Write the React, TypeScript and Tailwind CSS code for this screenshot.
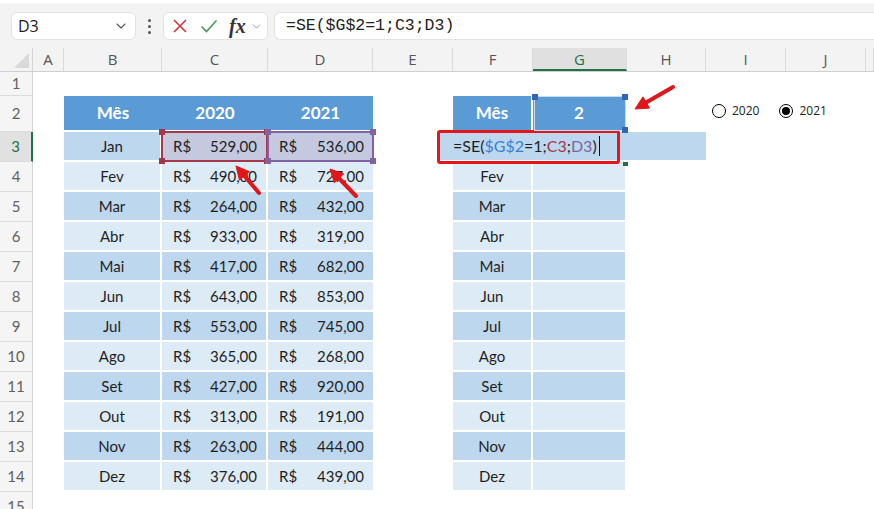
import { ChevronDown } from "lucide-react";

const colHeads = [
  { k: "A", w: "w-[31px]" },
  { k: "B", w: "w-[98px]" },
  { k: "C", w: "w-[106px]" },
  { k: "D", w: "w-[105px]" },
  { k: "E", w: "w-[80px]" },
  { k: "F", w: "w-[80px]" },
  { k: "G", w: "w-[94px]" },
  { k: "H", w: "w-[79px]" },
  { k: "I", w: "w-[80px]" },
  { k: "J", w: "w-[80px]" },
  { k: "", w: "w-[8px]" },
];

const data: [string, string, string][] = [
  ["Jan", "529,00", "536,00"],
  ["Fev", "490,00", "727,00"],
  ["Mar", "264,00", "432,00"],
  ["Abr", "933,00", "319,00"],
  ["Mai", "417,00", "682,00"],
  ["Jun", "643,00", "853,00"],
  ["Jul", "553,00", "745,00"],
  ["Ago", "365,00", "268,00"],
  ["Set", "427,00", "920,00"],
  ["Out", "313,00", "191,00"],
  ["Nov", "263,00", "444,00"],
  ["Dez", "376,00", "439,00"],
];

function RowHead({ n, active }: { n: number; active?: boolean }) {
  return (
    <div
      className={
        "flex w-[33px] shrink-0 items-center justify-center border-b border-[#dcdcdc] text-[15px] " +
        (active
          ? "border-r-2 border-r-[#217346] bg-[#e1e1e1] text-[#217346]"
          : "border-r border-r-[#d4d4d4] bg-[#f5f5f5] text-[#616161]")
      }
    >
      {n}
    </div>
  );
}

function Money({ v, bg, w, sep }: { v: string; bg: string; w: string; sep?: boolean }) {
  return (
    <div
      className={`${w} ${bg} flex shrink-0 items-center justify-between border-b-2 border-white pl-[11px] pr-[9px] ${
        sep ? "border-r-2" : ""
      }`}
    >
      <span>R$</span>
      <span>{v}</span>
    </div>
  );
}

function Handle({ className }: { className: string }) {
  return <div className={"absolute h-[6px] w-[6px] " + className} />;
}

function arrowHead(tx: number, ty: number, sx: number, sy: number) {
  const dx = tx - sx;
  const dy = ty - sy;
  const len = Math.hypot(dx, dy);
  const ux = dx / len;
  const uy = dy / len;
  const bx = tx - ux * 13;
  const by = ty - uy * 13;
  const px = -uy * 6.5;
  const py = ux * 6.5;
  return `${tx},${ty} ${bx + px},${by + py} ${bx - px},${by - py}`;
}

const arrows = [
  { s: [259, 193], t: [236, 166] },
  { s: [356, 196], t: [330, 169] },
  { s: [673, 87], t: [635, 109] },
];

export default function App() {
  return (
    <div className="relative h-[509px] w-[874px] overflow-hidden bg-white font-['Lato',sans-serif] text-[15px] text-[#1f1f1f]">
      {/* formula bar */}
      <div className="flex h-[48px] items-start gap-0 border-t-[3px] border-t-white bg-[#f3f3f3] pt-[9px] font-['Open_Sans',sans-serif]">
        <div className="ml-[11px] flex h-[28px] w-[125px] items-center justify-between rounded-[6px] border border-[#e2e2e2] bg-white pl-[6px] pr-[6px] text-[16px] text-[#222]">
          <span>D3</span>
          <ChevronDown size={16} strokeWidth={1.6} className="text-[#555]" />
        </div>
        <div className="flex h-[28px] w-[27px] flex-col items-center justify-center gap-[3px]">
          <div className="h-[3px] w-[3px] rounded-full bg-[#555]" />
          <div className="h-[3px] w-[3px] rounded-full bg-[#555]" />
          <div className="h-[3px] w-[3px] rounded-full bg-[#555]" />
        </div>
        <div className="flex h-[28px] w-[105px] items-center rounded-[6px] border border-[#e2e2e2] bg-white pl-[8px]">
          <svg width="16" height="16" viewBox="0 0 16 16">
            <path d="M2 2 L14 14 M14 2 L2 14" stroke="#d13438" strokeWidth="1.6" fill="none" />
          </svg>
          <svg width="18" height="16" viewBox="0 0 18 16" className="ml-[12px]">
            <path d="M1.5 8.5 L6.5 13.5 L16.5 2.5" stroke="#4e9a5e" strokeWidth="1.7" fill="none" />
          </svg>
          <span className="ml-[11px] font-['Liberation_Serif',serif] text-[20px] font-bold italic leading-none text-[#333]">
            fx
          </span>
          <ChevronDown size={13} strokeWidth={1.6} className="ml-[4px] text-[#8a8a8a]" />
        </div>
        <div className="ml-[6px] flex h-[28px] flex-1 items-center rounded-l-[6px] border border-r-0 border-[#e2e2e2] bg-white pl-[11px] font-['Liberation_Mono',monospace] text-[16.5px] text-[#222]">
          =SE($G$2=1;C3;D3)
        </div>
      </div>

      {/* column headers */}
      <div className="flex h-[24px] border-b border-[#cfcfcf] bg-[#f3f3f3] font-['Open_Sans',sans-serif] text-[15px] text-[#555]">
        <div className="relative w-[33px] shrink-0 border-r border-[#d4d4d4]">
          <div className="absolute bottom-[3px] right-[3px] h-0 w-0 border-b-[15px] border-l-[15px] border-b-[#d9d9d9] border-l-transparent" />
        </div>
        {colHeads.map((c) => (
          <div
            key={c.k + c.w}
            className={`${c.w} flex shrink-0 items-center justify-center border-r border-[#dadada] ${
              c.k === "G" ? "border-b-2 border-b-[#217346] bg-[#e0e0e0] pt-[2px] text-[#217346]" : ""
            }`}
          >
            {c.k}
          </div>
        ))}
      </div>

      {/* row 1 */}
      <div className="flex h-[24px]">
        <RowHead n={1} />
      </div>

      {/* row 2 header */}
      <div className="flex h-[36px]">
        <RowHead n={2} />
        <div className="w-[31px] shrink-0" />
        <div className="flex w-[98px] shrink-0 items-center justify-center border-b-2 border-white bg-[#5b9bd5] text-[17px] font-bold text-white">
          Mês
        </div>
        <div className="flex w-[106px] shrink-0 items-center justify-center border-b-2 border-white bg-[#5b9bd5] text-[17px] font-bold text-white">
          2020
        </div>
        <div className="flex w-[105px] shrink-0 items-center justify-center border-b-2 border-white bg-[#5b9bd5] text-[17px] font-bold text-white">
          2021
        </div>
        <div className="w-[80px] shrink-0" />
        <div className="flex w-[80px] shrink-0 items-center justify-center border-b-2 border-r-2 border-white bg-[#5b9bd5] text-[17px] font-bold text-white">
          Mês
        </div>
        <div className="flex w-[94px] shrink-0 items-center justify-center border-b-2 border-r-2 border-white bg-[#5b9bd5] text-[17px] font-bold text-white">
          2
        </div>
      </div>

      {/* data rows */}
      {data.map(([m, a, b], i) => {
        const bg = i % 2 === 0 ? "bg-[#bdd7ee]" : "bg-[#ddebf7]";
        const first = i === 0;
        return (
          <div key={m} className="flex h-[30px]">
            <RowHead n={i + 3} active={first} />
            <div className="w-[31px] shrink-0" />
            <div className={`flex w-[98px] shrink-0 items-center justify-center border-b-2 border-r-2 border-white ${bg}`}>
              {m}
            </div>
            <Money v={a} bg={first ? "bg-[#c4c9e0]" : bg} w="w-[106px]" sep />
            <Money v={b} bg={first ? "bg-[#c4c9e0]" : bg} w="w-[105px]" />
            <div className="w-[80px] shrink-0" />
            <div className={`flex w-[80px] shrink-0 items-center justify-center border-b-2 border-r-2 border-white ${bg}`}>
              {first ? "" : m}
            </div>
            <div className={`w-[94px] shrink-0 border-b-2 border-r-2 border-white ${bg}`} />
            {first && <div className="w-[79px] shrink-0 border-b-2 border-white bg-[#bdd7ee]" />}
          </div>
        );
      })}

      {/* row 15 */}
      <div className="flex h-[30px]">
        <RowHead n={15} />
      </div>

      {/* in-cell editor */}
      <div className="absolute left-[440px] top-[132px] flex h-[28px] w-[266px] items-center bg-[#bdd7ee] pl-[13px] text-[16px]">
        <span>=SE(</span>
        <span className="text-[#3a7fd5]">$G$2</span>
        <span>=1;</span>
        <span className="text-[#a5374b]">C3</span>
        <span>;</span>
        <span className="text-[#8064a2]">D3</span>
        <span>)</span>
        <span className="ml-[2px] h-[20px] w-px bg-black" />
      </div>
      <div className="absolute left-[437px] top-[130px] h-[34px] w-[183px] rounded-[3px] border-[3px] border-[#e3151a]" />
      <div className="absolute left-[623px] top-[162px] h-[4px] w-[5px] bg-[#217346]" />

      {/* reference borders */}
      <div className="absolute left-[161px] top-[131px] h-[31px] w-[107px] border-2 border-[#a5374b]">
        <Handle className="-left-[4px] -top-[4px] bg-[#a5374b]" />
        <Handle className="-right-[4px] -top-[4px] bg-[#a5374b]" />
        <Handle className="-bottom-[4px] -left-[4px] bg-[#a5374b]" />
        <Handle className="-bottom-[4px] -right-[4px] bg-[#a5374b]" />
      </div>
      <div className="absolute left-[267px] top-[131px] h-[31px] w-[107px] border-2 border-[#8064a2]">
        <Handle className="-left-[4px] -top-[4px] bg-[#8064a2]" />
        <Handle className="-right-[4px] -top-[4px] bg-[#8064a2]" />
        <Handle className="-bottom-[4px] -left-[4px] bg-[#8064a2]" />
        <Handle className="-bottom-[4px] -right-[4px] bg-[#8064a2]" />
      </div>
      <div className="absolute left-[534px] top-[96px] h-[35px] w-[92px] border border-[#c9dbf2]">
        <Handle className="-left-[3px] -top-[3px] h-[5px] w-[5px] bg-[#3465b4]" />
        <Handle className="-right-[3px] -top-[3px] h-[5px] w-[5px] bg-[#3465b4]" />
        <Handle className="-bottom-[3px] -right-[3px] h-[5px] w-[5px] bg-[#3465b4]" />
      </div>

      {/* option buttons */}
      <div className="absolute left-[712px] top-[102px] flex items-center font-['Open_Sans',sans-serif] text-[12px] text-[#222]">
        <div className="h-[14px] w-[14px] rounded-full border border-black bg-white" />
        <span className="ml-[6px]">2020</span>
        <div className="ml-[20px] flex h-[14px] w-[14px] items-center justify-center rounded-full border border-black bg-white">
          <div className="h-[8px] w-[8px] rounded-full bg-black" />
        </div>
        <span className="ml-[6px]">2021</span>
      </div>

      {/* arrows */}
      <svg className="pointer-events-none absolute left-0 top-0" width="874" height="509">
        {arrows.map((a, i) => (
          <g key={i} fill="#e3151a" stroke="#e3151a">
            <line x1={a.s[0]} y1={a.s[1]} x2={(a.s[0] + a.t[0] * 2) / 3 + (a.t[0] - a.s[0]) / 6} y2={(a.s[1] + a.t[1] * 2) / 3 + (a.t[1] - a.s[1]) / 6} strokeWidth="4" strokeLinecap="round" />
            <polygon points={arrowHead(a.t[0], a.t[1], a.s[0], a.s[1])} strokeWidth="1" />
          </g>
        ))}
      </svg>
    </div>
  );
}
